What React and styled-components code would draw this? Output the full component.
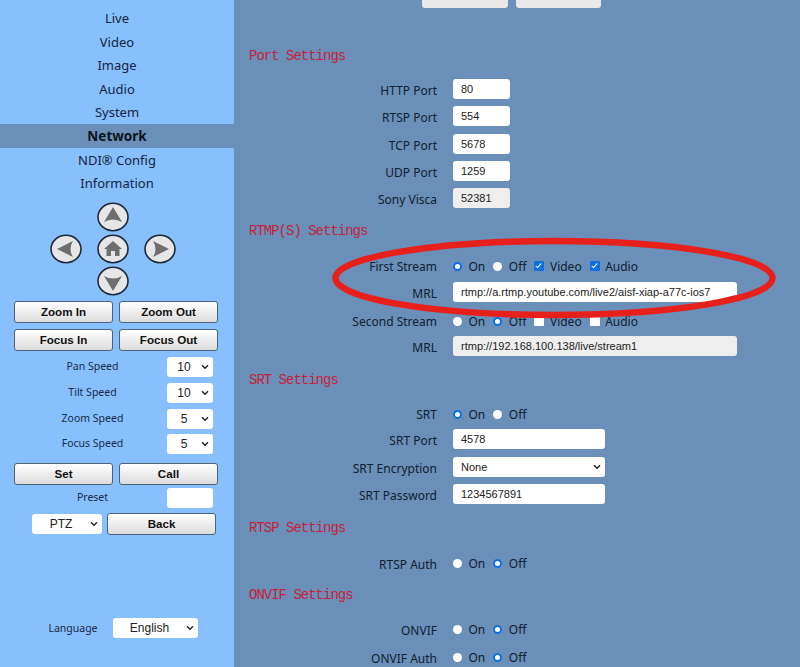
import React from 'react'
import styled, { createGlobalStyle, css } from 'styled-components'

const chevron = `url("data:image/svg+xml,%3Csvg xmlns='http://www.w3.org/2000/svg' width='8' height='6' viewBox='0 0 8 6'%3E%3Cpath d='M1 1.2 L4 4.2 L7 1.2' fill='none' stroke='%23222' stroke-width='1.4'/%3E%3C/svg%3E")`

const Global = createGlobalStyle`
    html, body {
        margin: 0;
        padding: 0;
        height: 667px;
        overflow: hidden;
    }
    body {
        font-family: "Noto Sans", sans-serif;
        color: #10202f;
    }
`
const selectBase = css`
    appearance: none;
    height: 20px;
    border: none;
    border-radius: 3px;
    background: #fff ${chevron} no-repeat right 4px center;
    font-family: "Liberation Sans", sans-serif;
    color: #222;
`
const Page = styled.div`
    display: flex;
    width: 800px;
    height: 667px;
    position: relative;
    overflow: hidden;
`
const Side = styled.div`
    width: 234px;
    background: #87bfff;
    display: flex;
    flex-direction: column;
    padding-top: 6px;
    box-sizing: border-box;
`
const NavItem = styled.div`
    height: 23.6px;
    line-height: 25px;
    text-align: center;
    font-size: ${p => (p.$active ? 13.5 : 13)}px;
    font-weight: ${p => (p.$active ? 700 : 400)};
    background: ${p => (p.$active ? '#6a90b9' : 'transparent')};
    color: ${p => (p.$active ? '#0a1420' : '#14263a')};
`
const Pad = styled.div`
    display: grid;
    grid-template-columns: repeat(3, 47px);
    grid-auto-rows: 32px;
    justify-content: center;
    justify-items: center;
    align-items: center;
    margin: 6px 8px 4px 0;
`
const PadCell = styled.div`
    grid-column: ${p => p.$col};
    grid-row: ${p => p.$row};
    width: 32px;
    height: 30px;
`
const BtnGrid = styled.div`
    display: grid;
    grid-template-columns: 99px 99px;
    gap: 6px;
    padding-left: 14px;
    margin-top: ${p => p.$top || 0}px;
`
const Btn = styled.button`
    height: 22px;
    width: ${p => (p.$w ? p.$w + 'px' : 'auto')};
    padding: 0;
    border: 1px solid #4f6275;
    border-radius: 3px;
    background: linear-gradient(#ffffff, #dcdcdc);
    font-family: "Liberation Sans", sans-serif;
    font-weight: 700;
    font-size: 11.6px;
    color: #111;
`
const SpeedRow = styled.div`
    display: flex;
    align-items: center;
    height: 20px;
    margin-top: ${p => p.$top || 0}px;
`
const SpeedLabel = styled.div`
    width: 167px;
    padding-left: 18px;
    box-sizing: border-box;
    text-align: center;
    font-size: 10.5px;
    color: #1a2c44;
    position: relative;
    top: -1px;
`
const SmallSelect = styled.select`
    ${selectBase}
    width: ${p => p.$w}px;
    font-size: 12px;
    text-align: center;
    padding: 0 12px 0 0;
`
const PresetInput = styled.input`
    width: 46px;
    height: 20px;
    box-sizing: border-box;
    border: none;
    border-radius: 3px;
    background: #fff;
`
const BackRow = styled.div`
    display: flex;
    align-items: center;
    gap: 5px;
    padding-left: 32px;
    margin-top: 5px;
`
const LangRow = styled.div`
    display: flex;
    align-items: center;
    margin-top: 83px;
`
const LangLabel = styled.div`
    width: 113px;
    padding-left: 33px;
    box-sizing: border-box;
    text-align: center;
    font-size: 10.5px;
    color: #1a2c44;
`
const Main = styled.div`
    flex: 1;
    background: #6a90b9;
`
const TopBar = styled.div`
    height: 8px;
    display: flex;
    align-items: flex-end;
    gap: 8px;
    padding-left: 188px;
    overflow: hidden;
`
const TopBtn = styled.div`
    width: 85.5px;
    height: 22px;
    flex-shrink: 0;
    border-radius: 3px;
    background: #e8e8e8;
`
const Heading = styled.h2`
    margin: ${p => p.$top}px 0 ${p => p.$bottom}px 15px;
    height: 18px;
    line-height: 20px;
    font-family: "Liberation Mono", monospace;
    font-size: 14px;
    font-weight: 400;
    letter-spacing: -1px;
    color: #c8203a;
`
const Row = styled.div`
    display: flex;
    align-items: center;
    height: 20px;
    margin-bottom: ${p => p.$gap ?? 7.3}px;
`
const Label = styled.div`
    width: 203px;
    box-sizing: border-box;
    text-align: right;
    font-size: 12px;
    color: #10202f;
    flex-shrink: 0;
    position: relative;
    top: 1.5px;
`
const Field = styled.input`
    width: ${p => p.$w}px;
    height: 20px;
    box-sizing: border-box;
    padding: 0 8px;
    border: none;
    border-radius: 3px;
    background: ${p => (p.readOnly ? '#eeeeee' : '#ffffff')};
    font-family: "Liberation Sans", sans-serif;
    font-size: 11px;
    color: #222;
    margin-left: 16px;
`
const FieldSelect = styled.select`
    ${selectBase}
    width: 152px;
    margin-left: 16px;
    font-size: 11px;
    padding-left: 8px;
`
const Opts = styled.div`
    display: flex;
    align-items: center;
    margin: 2px 0 0 16px;
    font-size: 12px;
    color: #10202f;
`
const Opt = styled.label`
    display: flex;
    align-items: center;
    margin-right: 8px;
`
const Radio = styled.input.attrs({ type: 'radio' })`
    appearance: none;
    box-sizing: border-box;
    width: 9px;
    height: 9px;
    margin: 0 6.5px 0 0;
    border-radius: 50%;
    background: #fff;
    &:checked {
        border: 2px solid #0f6fe0;
    }
`
const Check = styled.input.attrs({ type: 'checkbox' })`
    appearance: none;
    position: relative;
    box-sizing: border-box;
    width: 10px;
    height: 10px;
    margin: 0 5.5px 0 0;
    border-radius: 1px;
    background: #fff;
    &:checked {
        background: #0f6fe0;
    }
    &:checked::after {
        content: "";
        position: absolute;
        left: 3px;
        top: 1px;
        width: 2px;
        height: 5px;
        border: solid #fff;
        border-width: 0 1.5px 1.5px 0;
        transform: rotate(40deg);
    }
`
const Mark = styled.svg`
    position: absolute;
    left: 330px;
    top: 234px;
    pointer-events: none;
`

function Arrow({ dir }) {
    const shapes = {
        up: <path d="M16 5 L25 20 Q16 15 7 20 Z" />,
        down: <path d="M16 25 L7 10 Q16 15 25 10 Z" />,
        left: <path d="M7 15 L23 7 Q18 15 23 23 Z" />,
        right: <path d="M25 15 L9 7 Q14 15 9 23 Z" />,
        home: <path d="M16 7 L25 15 L22.5 15 L22.5 22 L18 22 L18 17 L14 17 L14 22 L9.5 22 L9.5 15 L7 15 Z" />,
    }
    return (
        <svg width="32" height="30" viewBox="0 0 32 30">
            <ellipse cx="16" cy="15" rx="15" ry="13.7" fill="#e6e6e6" stroke="#1d2a35" strokeWidth="1.6" />
            <g fill="#6e6e6e">{shapes[dir]}</g>
        </svg>
    )
}

function Speed({ label, value, top }) {
    return (
        <SpeedRow $top={top}>
            <SpeedLabel>{label}</SpeedLabel>
            <SmallSelect $w={46} defaultValue={value}>
                <option>{value}</option>
            </SmallSelect>
        </SpeedRow>
    )
}

function OnOff({ name, on, extras }) {
    return (
        <Opts>
            <Opt><Radio name={name} defaultChecked={on} /><span>On</span></Opt>
            <Opt><Radio name={name} defaultChecked={!on} /><span>Off</span></Opt>
            {extras && <Opt><Check defaultChecked={on} /><span>Video</span></Opt>}
            {extras && <Opt><Check defaultChecked={on} /><span>Audio</span></Opt>}
        </Opts>
    )
}

function App() {
    return (
        <Page>
            <Global />
            <Side>
                {['Live', 'Video', 'Image', 'Audio', 'System', 'Network', 'NDI® Config', 'Information'].map(n => (
                    <NavItem key={n} $active={n === 'Network'}>{n}</NavItem>
                ))}
                <Pad>
                    <PadCell $col={2} $row={1}><Arrow dir="up" /></PadCell>
                    <PadCell $col={1} $row={2}><Arrow dir="left" /></PadCell>
                    <PadCell $col={2} $row={2}><Arrow dir="home" /></PadCell>
                    <PadCell $col={3} $row={2}><Arrow dir="right" /></PadCell>
                    <PadCell $col={2} $row={3}><Arrow dir="down" /></PadCell>
                </Pad>
                <BtnGrid>
                    <Btn>Zoom In</Btn>
                    <Btn>Zoom Out</Btn>
                    <Btn>Focus In</Btn>
                    <Btn>Focus Out</Btn>
                </BtnGrid>
                <Speed label="Pan Speed" value="10" top={6} />
                <Speed label="Tilt Speed" value="10" top={6} />
                <Speed label="Zoom Speed" value="5" top={6} />
                <Speed label="Focus Speed" value="5" top={5} />
                <BtnGrid $top={9}>
                    <Btn>Set</Btn>
                    <Btn>Call</Btn>
                </BtnGrid>
                <SpeedRow $top={3}>
                    <SpeedLabel>Preset</SpeedLabel>
                    <PresetInput />
                </SpeedRow>
                <BackRow>
                    <SmallSelect $w={70} defaultValue="PTZ">
                        <option>PTZ</option>
                    </SmallSelect>
                    <Btn $w={109}>Back</Btn>
                </BackRow>
                <LangRow>
                    <LangLabel>Language</LangLabel>
                    <SmallSelect $w={85} defaultValue="English">
                        <option>English</option>
                    </SmallSelect>
                </LangRow>
            </Side>
            <Main>
                <TopBar>
                    <TopBtn />
                    <TopBtn />
                </TopBar>
                <Heading $top={38} $bottom={15}>Port Settings</Heading>
                <Row><Label>HTTP Port</Label><Field $w={57} defaultValue="80" /></Row>
                <Row><Label>RTSP Port</Label><Field $w={57} defaultValue="554" /></Row>
                <Row><Label>TCP Port</Label><Field $w={57} defaultValue="5678" /></Row>
                <Row><Label>UDP Port</Label><Field $w={57} defaultValue="1259" /></Row>
                <Row $gap={0}><Label>Sony Visca</Label><Field $w={57} readOnly defaultValue="52381" /></Row>
                <Heading $top={13} $bottom={16}>RTMP(S) Settings</Heading>
                <Row $gap={7}><Label>First Stream</Label><OnOff name="first" on extras /></Row>
                <Row $gap={8}><Label>MRL</Label><Field $w={284} defaultValue="rtmp://a.rtmp.youtube.com/live2/aisf-xiap-a77c-ios7" /></Row>
                <Row $gap={6}><Label>Second Stream</Label><OnOff name="second" on={false} extras /></Row>
                <Row $gap={0}><Label>MRL</Label><Field $w={284} readOnly defaultValue="rtmp://192.168.100.138/live/stream1" /></Row>
                <Heading $top={14} $bottom={15}>SRT Settings</Heading>
                <Row $gap={6}><Label>SRT</Label><OnOff name="srt" on /></Row>
                <Row $gap={8}><Label>SRT Port</Label><Field $w={152} defaultValue="4578" /></Row>
                <Row $gap={6.6}><Label>SRT Encryption</Label><FieldSelect defaultValue="None"><option>None</option></FieldSelect></Row>
                <Row $gap={0}><Label>SRT Password</Label><Field $w={152} defaultValue="1234567891" /></Row>
                <Heading $top={14} $bottom={17}>RTSP Settings</Heading>
                <Row $gap={0}><Label>RTSP Auth</Label><OnOff name="rtsp" on={false} /></Row>
                <Heading $top={12} $bottom={16}>ONVIF Settings</Heading>
                <Row $gap={8}><Label>ONVIF</Label><OnOff name="onvif" on={false} /></Row>
                <Row $gap={0}><Label>ONVIF Auth</Label><OnOff name="onvifAuth" on={false} /></Row>
            </Main>
            <Mark width="450" height="90" viewBox="0 0 450 90">
                <ellipse cx="224" cy="44" rx="218.5" ry="37" fill="none" stroke="#e8201c" strokeWidth="6.5" />
            </Mark>
        </Page>
    )
}

export default App
